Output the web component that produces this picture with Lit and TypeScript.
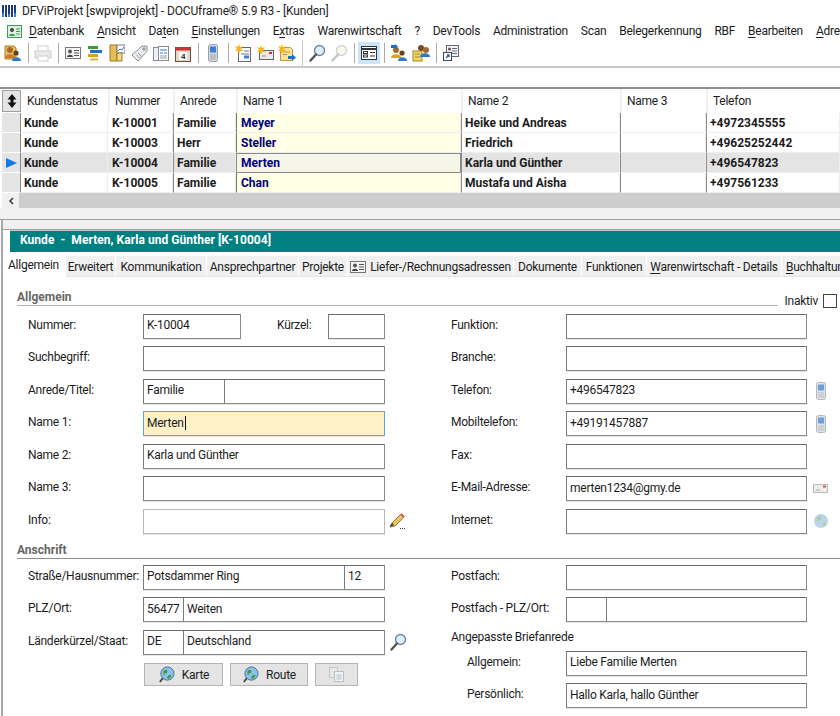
import { LitElement, html, css, svg } from "lit";
import { customElement } from "lit/decorators.js";

const sv = (w: number, h: number, body: unknown, cls = "") =>
  html`<svg class=${cls} width=${w} height=${h} viewBox="0 0 ${w} ${h}">${body}</svg>`;

const card = (w = 16) => sv(w, 14, svg`<rect x=".5" y="1.5" width="15" height="11" fill="#f4f4f4" stroke="#777"/><circle cx="5" cy="5.5" r="2" fill="#555"/><path d="M2 11c0-3 6-3 6 0z" fill="#444"/><path d="M9 4.5h5M9 7h5M9 9.5h5" stroke="#555"/>`);
const people = (a = "#c77a2c", b = "#2f79c9") => svg`<circle cx="6" cy="6" r="3" fill="#a5682d"/><path d="M1 14c0-5 10-5 10 0z" fill=${a}/><circle cx="12" cy="9" r="2.6" fill="#6b3f1f"/><path d="M8 17c0-5 9-5 9 0z" fill=${b}/>`;
const phone = (o = 1) => html`<svg width="10" height="18" viewBox="0 0 10 18" opacity=${o}><rect x=".5" y=".5" width="9" height="17" rx="2" fill="#d5d9de" stroke="#9aa0a8"/><rect x="2" y="2.5" width="6" height="6" fill="#3f7fd0"/><path d="M2.5 11h5M2.5 13h5M2.5 15h5" stroke="#777" stroke-dasharray="1 1"/></svg>`;
const star = svg`<path d="M4 0l1 3 3-1-2 3 2 2-3 0-1 3-1-3-3 0 2-2-2-3 3 1z" fill="#f7b518"/>`;
const arrow = svg`<path d="M10 12h4v-2l4 3.5-4 3.5v-2h-4z" fill="#1c6fd0"/>`;
const lens = (o = 1, col = "#dfeefa") => html`<svg width="17" height="18" viewBox="0 0 17 18" opacity=${o}><circle cx="10.5" cy="6.5" r="5" fill=${col} stroke="#6d8aa3" stroke-width="1.4"/><path d="M7 10.5L1.5 16.5" stroke="#555" stroke-width="2.4" stroke-linecap="round"/></svg>`;
const globe = (s = 18) => html`<svg width=${s} height=${s} viewBox="0 0 18 18"><circle cx="10" cy="8" r="7" fill="#8fc0ea" stroke="#3f6f99"/><path d="M6 5c2-2 4-1 4 1s-3 1-3 3-2 0-1-4zM11 10c2-1 4-1 3 1s-3 3-4 2 0-2 1-3z" fill="#3d9a45"/><path d="M5 13l-3 4" stroke="#444" stroke-width="2"/></svg>`;

const tb: unknown[] = [
  sv(18, 18, svg`<path d="M1 2h9l2 2v11H1z" fill="#e8c25a" stroke="#a87f20"/>${people()}`),
  "s",
  html`<svg width="18" height="17" viewBox="0 0 18 17" opacity=".4"><rect x="4" y="1" width="10" height="6" fill="#fff" stroke="#888"/><rect x="1" y="6" width="16" height="7" fill="#ccc" stroke="#888"/><rect x="4" y="11" width="10" height="5" fill="#fff" stroke="#888"/></svg>`,
  "s",
  card(),
  sv(16, 15, svg`<path d="M1 1.5h10" stroke="#3f9a3f" stroke-width="3"/><path d="M3 5.5h12" stroke="#1d6fc6" stroke-width="3"/><path d="M1 9.5h10" stroke="#e39a1e" stroke-width="3"/><path d="M3 13.5h8" stroke="#d9b23a" stroke-width="2"/>`),
  sv(16, 18, svg`<path d="M1 1h7v16H1z" fill="#e6bc55" stroke="#9c7a25"/><rect x="8" y="1" width="8" height="8" fill="#fff" stroke="#778"/><path d="M9 7l2-2 2 1 2-3" stroke="#2e79c9" fill="none"/><path d="M8 9h5v8H8z" fill="#f0d68a" stroke="#9c7a25"/>`),
  sv(17, 17, svg`<path d="M11 1h5v5l-9 10-6-6z" fill="#e9edf2" stroke="#8a8f96"/><path d="M7 8l4 4M5.500 10l3 3" stroke="#999"/><circle cx="13" cy="4" r="1.200" fill="#fff" stroke="#777"/>`),
  sv(16, 17, svg`<rect x=".5" y="2.500" width="10" height="13" fill="#eef1f5" stroke="#889"/><rect x="5.500" y="1.500" width="10" height="14" fill="#fff" stroke="#889"/><path d="M7 5h7M7 8h3M11 8h3" stroke="#2e79c9"/><path d="M7 11h7M7 13h7" stroke="#999"/>`),
  sv(16, 17, svg`<rect x=".5" y="2.500" width="15" height="14" fill="#e7d8c5" stroke="#6b5040"/><rect x="1" y="2" width="14" height="3.500" fill="#c33"/><rect x="4" y="7" width="8" height="8" fill="#fff"/><text x="8" y="14.300" font-size="8" font-weight="700" text-anchor="middle" font-family="Liberation Sans" fill="#222">4</text>`),
  "s",
  phone(),
  "s",
  sv(16, 18, svg`<rect x="3.500" y="3.500" width="12" height="14" fill="#fff" stroke="#667"/><path d="M9 7h5M6 10h8" stroke="#777"/><rect x="9" y="11.500" width="5" height="3" fill="#3f7fd0"/>${star}`),
  sv(17, 16, svg`<rect x="2.500" y="5.500" width="14" height="9" fill="#ece9e6" stroke="#666"/><path d="M5 11h4" stroke="#888"/><rect x="12" y="7" width="3" height="2" fill="#c33"/>${star}`),
  sv(18, 18, svg`<path d="M2.500 3.500h10l2 2v11h-12z" fill="#f9e39a" stroke="#b79a3a"/><path d="M5 8h7M5 10.500h4" stroke="#b79a3a"/>${star}${arrow}`),
  "b",
  lens(),
  lens(0.35, "#f6e8c8"),
  "s",
  "a",
  "s",
  sv(18, 18, svg`${people("#d9a520", "#2f79c9")}<path d="M1 1h4V0l3 2.500L5 5V4H1z" fill="#1c6fd0"/>`),
  sv(18, 18, svg`<rect x="1" y="7" width="9" height="10" fill="#f2d66c" stroke="#a58a25"/><path d="M3 10h5M3 13h5" stroke="#a58a25"/><circle cx="9" cy="4" r="3" fill="#7a4a22"/><circle cx="14" cy="6" r="3" fill="#a5682d"/><path d="M8 13c0-5 10-5 10 0z" fill="#2f79c9"/>`),
  "s",
  sv(16, 16, svg`<rect x="3.500" y=".5" width="12" height="11" fill="#f3f3f3" stroke="#667"/><circle cx="6.500" cy="4" r="1.500" fill="#556"/><path d="M9 3.500h5M9 6h5M9 8.500h5" stroke="#667"/><rect x=".5" y="7.500" width="8" height="8" fill="#fff" stroke="#445"/><path d="M3 13l3-3M4 10h2v2" stroke="#1c5fb0" stroke-width="1.300" fill="none"/>`),
];

const menus = [
  ["", "D", "atenbank"], ["", "A", "nsicht"], ["Da", "t", "en"], ["", "E", "instellungen"], ["E", "x", "tras"],
  ["Warenwirtschaft", "", ""], ["?", "", ""], ["DevTools", "", ""], ["Administration", "", ""], ["Scan", "", ""],
  ["Belegerkennung", "", ""], ["RBF", "", ""], ["", "B", "earbeiten"], ["", "A", "dresse"],
];

const rows = [
  ["K-10001", "Familie", "Meyer", "Heike und Andreas", "+4972345555"],
  ["K-10003", "Herr", "Steller", "Friedrich", "+49625252442"],
  ["K-10004", "Familie", "Merten", "Karla und Günther", "+496547823"],
  ["K-10005", "Familie", "Chan", "Mustafa und Aisha", "+497561233"],
];

const tabs: [string, number, unknown][] = [
  ["t1", 61, "Allgemein"], ["", 50, "Erweitert"], ["", 91, "Kommunikation"], ["", 92, "Ansprechpartner"], ["", 49, "Projekte"],
  ["", 166, html`<span class="tabicon">${card()}</span><span>Liefer-/Rechnungsadressen</span>`], ["", 68, "Dokumente"], ["", 65, "Funktionen"],
  ["", 135, html`<span><u>W</u>arenwirtschaft - Details</span>`], ["", 80, html`<span><u>B</u>uchhaltung</span>`],
];

const mail = html`<svg width="16" height="11" viewBox="0 0 16 11"><rect x=".5" y="1.500" width="14" height="8" fill="#ececec" stroke="#bbb"/><rect x="10" y="2.500" width="3" height="2" fill="#d9534f"/><path d="M3 7h4" stroke="#aaa"/></svg>`;
const pencil = html`<svg width="18" height="18" viewBox="0 0 18 18"><path d="M1 15l2-4 9-9 3 3-9 9z" fill="#e7c65a" stroke="#8a7a3a"/><path d="M12 2l3 3" stroke="#d9534f" stroke-width="2"/><path d="M1 15l2-4 2 2z" fill="#333"/><path d="M11 16.500h1M13 16.500h1M15 16.500h1" stroke="#333"/></svg>`;
const g18 = html`<svg width="16" height="16" viewBox="0 0 16 16"><circle cx="8" cy="8" r="7" fill="#bcd4e6"/><path d="M4 4c2-2 5-1 5 1s-3 1-3 3-3 0-2-4zM10 10c2-1 4-1 3 1s-3 2-3 1 0-1 0-2z" fill="#a9cfa8"/></svg>`;

type F = { l: string; w?: [number, string, string?][]; i?: unknown; k?: string };

@customElement("app-root")
export class AppRoot extends LitElement {
  static styles = css`
    :host { display: block; width: 840px; height: 716px; overflow: hidden; background: #fff; color: #1c1c1c;
      font: 12px/16px Roboto, "Noto Sans", sans-serif; letter-spacing: -0.25px; }
    svg { display: block; flex: none; }
    u { text-underline-offset: 2px; }
    .title { height: 22px; display: flex; align-items: center; gap: 5px; padding-left: 2px; white-space: nowrap; letter-spacing: -0.13px; }
    .menu { height: 18px; display: flex; align-items: center; gap: 12.9px; padding-left: 7px; white-space: nowrap; overflow: hidden; }
    .menu .logo { margin-right: -5.9px; }
    .tools { height: 26px; display: flex; align-items: center; padding-left: 2px; border-bottom: 2px solid #c8c8cc; background: #fff; }
    .slot { width: 22px; height: 22px; display: flex; align-items: center; justify-content: center; flex: none; }
    .slot.active { background: #cce4f7; }
    .sep { width: 8px; height: 20px; flex: none; display: flex; justify-content: center; }
    .sep::after { content: ""; width: 1px; background: #aaa; }
    .brk { width: 8px; align-self: stretch; flex: none; display: flex; justify-content: center; }
    .brk::after { content: ""; width: 1px; background: #ccc; }
    .strip { height: 19px; background: #fff; border-bottom: 2px solid #8f8f8f; }
    .grid { display: grid; grid-template-columns: 19px 87px 65px 63px 225px 159px 86px 134px; padding-left: 2px; background: #fff; }
    .hd { height: 24px; display: flex; align-items: center; padding-left: 5px; border-left: 2px solid #f0f0f0; }
    .corner { height: 22px; margin-top: 1px; border: 1px solid #a0a0a0; background: #e4e4e4; display: flex; align-items: center; justify-content: center; box-sizing: border-box; }
    .hd.first { border-left: 0; padding-left: 6px; }
    .rh { height: 20px; background: #e4e4e4; border-right: 1px solid #888; border-bottom: 1px solid #fff; box-sizing: border-box; display: flex; align-items: center; justify-content: center; }
    .c { height: 20px; display: flex; align-items: center; padding-left: 4px; font-weight: 700; letter-spacing: 0; border-bottom: 1px solid #eee; box-sizing: border-box; border-right: 1px solid #eee; white-space: nowrap; }
    .c.c1 { padding-left: 3px; }
    .c.sel { background: #e4e4e4; }
    .c.dark { border-left: 1px solid #8a8a8a; padding-left: 3px; }
    .c.nm { color: #000080; background: #ffffe5; border-left: 1px solid #777; }
    .c.nm.sel { background: #f6f6e8; border: 1px solid #8a8a8a; }
    .scroll { height: 15px; background: #cdcdcd; margin-left: 2px; display: flex; }
    .scroll span { width: 17px; background: #f0f0f0; display: flex; align-items: center; justify-content: center; }
    .gap { height: 11px; background: #f0f0f0; border-bottom: 1px solid #a0a0a0; }
    .panel { height: 496px; background: #fff; border-left: 2px solid #a8a8a8; margin-left: 1px; }
    .pt { height: 9px; background: #f0f0f0; border-bottom: 1px solid #a0a0a0; }
    .teal { margin-left: 7px; height: 22px; background: #008080; color: #fff; font-weight: 700; letter-spacing: 0.05px; padding: 0 0 4px 10px; display: flex; align-items: center; border-top: 1px solid #c8c8c8; box-sizing: border-box; white-space: nowrap; }
    .tabs { display: flex; height: 25px; align-items: flex-end; white-space: nowrap; overflow: hidden; }
    .tab { height: 21px; background: #f0f0f0; border-right: 1px solid #fff; box-sizing: border-box; flex: none; display: flex; align-items: center; justify-content: center; gap: 4px; border-bottom: 1px solid #e4e4e4; overflow: hidden; padding-top: 1px; }
    .tab.t1 { height: 24px; background: #fff; border: 0; margin-right: 2px; padding-top: 0; }
    .tab.last { justify-content: flex-start; padding-left: 4px; }
    .sec { display: flex; align-items: flex-end; padding-left: 14px; height: 29px; gap: 7px; }
    .sectitle { flex: 1; font-weight: 700; letter-spacing: 0; color: #666; border-bottom: 1px solid #b4b4b4; height: 14px; line-height: 13px; }
    .ina { display: flex; align-items: center; gap: 5px; padding-right: 3px; margin-bottom: -3px; }
    .box { width: 12px; height: 12px; border: 1px solid #444; }
    .cols { display: grid; grid-template-columns: 423px 1fr; padding-top: 7.5px; }
    .col { display: grid; grid-auto-rows: 32.5px; padding-left: 25px; align-content: start; }
    .col.flow { display: block; }
    .col.flow .row { height: 32.5px; }
    .row { display: flex; align-items: flex-start; }
    .lb { width: 115px; flex: none; padding-top: 3px; white-space: nowrap; }
    .sub { padding-left: 16px; width: 99px; }
    .fields { display: flex; width: 242px; flex: none; }
    .f { height: 25px; box-sizing: border-box; flex: none; border: 1px solid #8a8a8a; border-top-color: #6a6a6a; border-left-color: #7a7a7a; background: #fff; display: flex; align-items: center; padding: 0 0 2px 3px; white-space: nowrap; margin-left: -1px; box-shadow: 0 1px 0 #e6e6e6; }
    .f:first-child { margin-left: 0; }
    .f.soft { border-color: #b8b8b8; }
    .f.on { background: #fef0c7; border-color: #5aa5e8; }
    .caret { width: 1px; height: 14px; background: #111; margin-left: 1px; }
    .mid { padding: 3px 0 0 36px; width: 87px; box-sizing: border-box; flex: none; white-space: nowrap; }
    .mid + .f { margin-left: 0; }
    .ic { margin-left: 3px; width: 20px; height: 25px; display: flex; align-items: center; justify-content: center; flex: none; }
    .sec2 { display: flex; padding-left: 14px; margin-top: 2.5px; }
    .sec2 div { flex: 1; font-weight: 700; letter-spacing: 0; color: #666; border-bottom: 1px solid #8f8f8f; height: 14px; line-height: 13px; }
    .btns { display: flex; gap: 7px; padding-left: 116px; margin-top: 1px; }
    .btn { height: 23px; box-sizing: border-box; background: #e4e4e4; border: 1px solid #b4b4b4; display: flex; align-items: center; justify-content: center; gap: 7px; }
    .cols2 { padding-top: 6px; }
    .note { height: 22px; line-height: 16px; margin-top: -1px; }
  `;

  private field(f: F) {
    return html`<div class="row">
      <div class="lb ${f.k === "sub" ? "sub" : ""}">${f.l}</div>
      <div class="fields">
        ${(f.w || []).map(([w, t, c]) => html`<div class="f ${c || ""}" style="width:${w}px">${t === "|" ? html`Merten<span class="caret"></span>` : t}</div>`)}
      </div>
      ${f.i ? html`<div class="ic">${f.i}</div>` : ""}
    </div>`;
  }

  render() {
    const top1: F[] = [
      { l: "Suchbegriff:", w: [[242, ""]] },
      { l: "Anrede/Titel:", w: [[82, "Familie"], [161, ""]] },
      { l: "Name 1:", w: [[242, "|", "on"]] },
      { l: "Name 2:", w: [[242, "Karla und Günther"]] },
      { l: "Name 3:", w: [[242, ""]] },
      { l: "Info:", w: [[242, "", "soft"]], i: pencil },
    ];
    const top2: F[] = [
      { l: "Funktion:", w: [[241, ""]] },
      { l: "Branche:", w: [[241, ""]] },
      { l: "Telefon:", w: [[241, "+496547823"]], i: phone(0.75) },
      { l: "Mobiltelefon:", w: [[241, "+49191457887"]], i: phone(0.75) },
      { l: "Fax:", w: [[241, ""]] },
      { l: "E-Mail-Adresse:", w: [[241, "merten1234@gmy.de"]], i: mail },
      { l: "Internet:", w: [[241, ""]], i: g18 },
    ];
    const bot1: F[] = [
      { l: "Straße/Hausnummer:", w: [[202, "Potsdammer Ring"], [41, "12"]] },
      { l: "PLZ/Ort:", w: [[41, "56477"], [202, "Weiten"]] },
      { l: "Länderkürzel/Staat:", w: [[41, "DE"], [202, "Deutschland"]], i: lens() },
    ];
    const bot2: F[] = [
      { l: "Postfach:", w: [[241, ""]] },
      { l: "Postfach - PLZ/Ort:", w: [[41, ""], [201, ""]] },
    ];
    const bot3: F[] = [
      { l: "Allgemein:", k: "sub", w: [[241, "Liebe Familie Merten"]] },
      { l: "Persönlich:", k: "sub", w: [[241, "Hallo Karla, hallo Günther"]] },
    ];
    return html`
      <div class="title">
        <svg width="15" height="14" viewBox="0 0 15 14"><path d="M1 1v12M4 1v12M7 1v12M10 1v12M13 1v12" stroke="#1f3a78" stroke-width="2"/><path d="M1 9v4M7 10v3M13 9v4" stroke="#3b7fd0" stroke-width="2"/></svg>
        <span>DFViProjekt [swpviprojekt] - DOCUframe® 5.9 R3 - [Kunden]</span>
      </div>
      <div class="menu">
        <span class="logo">${sv(15, 13, svg`<rect x=".5" y=".5" width="14" height="12" fill="#dff0df" stroke="#3f9a5a"/><circle cx="5" cy="5" r="2" fill="#444"/><path d="M2 11c0-3 6-3 6 0z" fill="#3f9a5a"/><path d="M9 4h4M9 6.500h4M9 9h4" stroke="#3f9a5a"/>`)}</span>
        ${menus.map(([a, b, c]) => html`<span>${a}${b ? html`<u>${b}</u>` : ""}${c}</span>`)}
      </div>
      <div class="tools">
        ${tb.map((t) =>
          t === "s" ? html`<div class="sep"></div>`
          : t === "b" ? html`<div class="brk"></div>`
          : t === "a" ? html`<div class="slot active">${sv(16, 14, svg`<rect x=".5" y=".5" width="15" height="13" fill="#fff" stroke="#333"/><path d="M1 3h14" stroke="#333" stroke-width="2"/><rect x="2.500" y="5.500" width="4" height="2" fill="none" stroke="#333"/><rect x="2.500" y="9" width="4" height="2" fill="none" stroke="#333"/><path d="M9 6.500h5M9 10h5" stroke="#333"/>`)}</div>`
          : html`<div class="slot">${t}</div>`)}
      </div>
      <div class="strip"></div>
      <div class="grid">
        <div class="corner"><svg width="10" height="14" viewBox="0 0 10 14"><path d="M5 0l4.500 5.500h-9zM5 14L.5 8.500h9z" fill="#111"/><rect x="3.500" y="4" width="3" height="6" fill="#111"/></svg></div>
        ${["Kundenstatus", "Nummer", "Anrede", "Name 1", "Name 2", "Name 3", "Telefon"].map((h, i) => html`<div class="hd ${i === 0 ? "first" : ""}">${h}</div>`)}
        ${rows.map((r, i) => {
          const s = i === 2 ? "sel" : "";
          return html`
            <div class="rh">${i === 2 ? html`<svg width="11" height="10" viewBox="0 0 11 10"><path d="M0 0l11 5-11 5z" fill="#0f7ae5"/></svg>` : ""}</div>
            <div class="c c1 ${s}">Kunde</div>
            <div class="c ${s}">${r[0]}</div>
            <div class="c dark ${s}">${r[1]}</div>
            <div class="c nm ${s}">${r[2]}</div>
            <div class="c dark ${s}">${r[3]}</div>
            <div class="c dark ${s}"></div>
            <div class="c dark ${s}">${r[4]}</div>`;
        })}
      </div>
      <div class="scroll"><span><svg width="6" height="8" viewBox="0 0 6 8"><path d="M5 1L2 4l3 3" fill="none" stroke="#333" stroke-width="1.500"/></svg></span></div>
      <div class="gap"></div>
      <div class="panel">
        <div class="pt"></div>
        <div class="teal">Kunde &nbsp;-&nbsp; Merten, Karla und Günther [K-10004]</div>
        <div class="tabs">
          ${tabs.map(([c, w, t], i) => html`<div class="tab ${c} ${i === tabs.length - 1 ? "last" : ""}" style="width:${w}px">${t}</div>`)}
        </div>
        <div class="sec">
          <div class="sectitle">Allgemein</div>
          <div class="ina">Inaktiv <span class="box"></span></div>
        </div>
        <div class="cols">
          <div class="col">
            <div class="row">
              <div class="lb">Nummer:</div>
              <div class="fields">
                <div class="f" style="width:98px">K-10004</div>
                <div class="mid">Kürzel:</div>
                <div class="f" style="width:57px"></div>
              </div>
            </div>
            ${top1.map((f) => this.field(f))}
          </div>
          <div class="col">${top2.map((f) => this.field(f))}</div>
        </div>
        <div class="sec2"><div>Anschrift</div></div>
        <div class="cols cols2">
          <div class="col">
            ${bot1.map((f) => this.field(f))}
            <div class="btns">
              <div class="btn" style="width:79px">${globe(17)}Karte</div>
              <div class="btn" style="width:78px">${globe(17)}Route</div>
              <div class="btn" style="width:43px"><svg width="15" height="15" viewBox="0 0 15 15" opacity=".55"><rect x=".5" y=".5" width="8" height="10" fill="#eee" stroke="#aaa"/><rect x="5.500" y="4.500" width="9" height="10" fill="#fff" stroke="#8aa"/><path d="M7.500 8h5M7.500 10h5M7.500 12h5" stroke="#7aa4cc"/></svg></div>
            </div>
          </div>
          <div class="col flow">
            ${bot2.map((f) => this.field(f))}
            <div class="note">Angepasste Briefanrede</div>
            ${bot3.map((f) => this.field(f))}
          </div>
        </div>
      </div>
    `;
  }
}
